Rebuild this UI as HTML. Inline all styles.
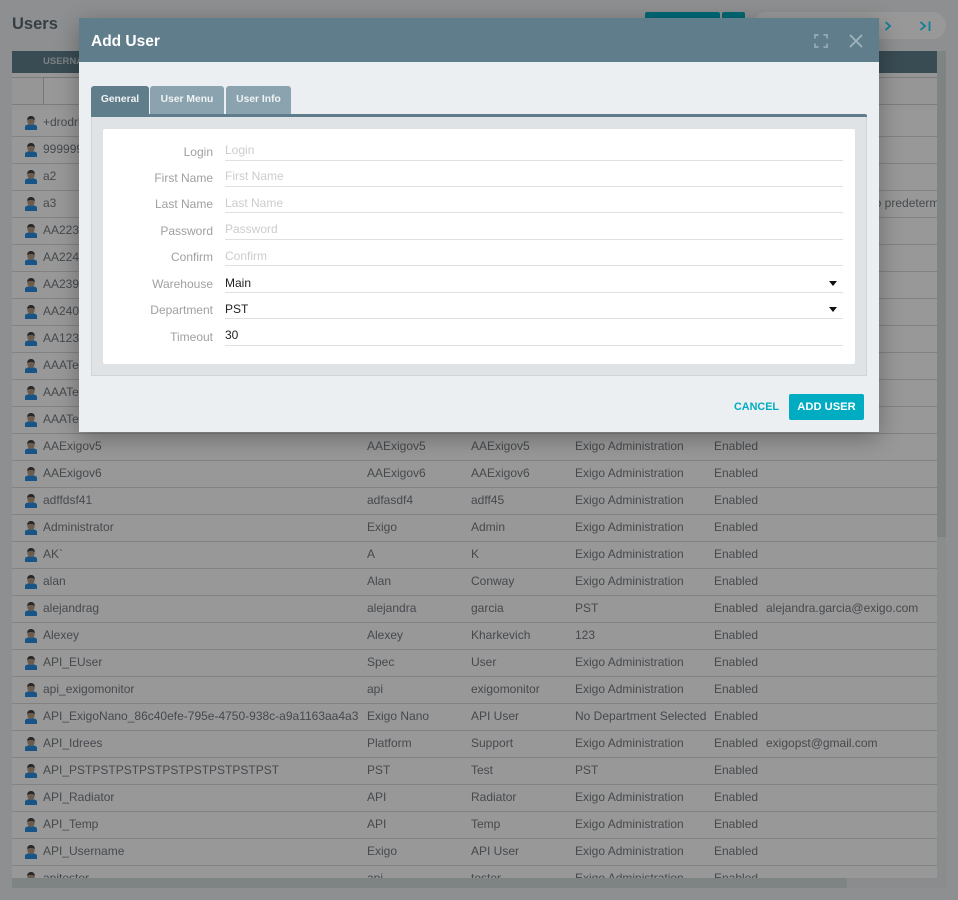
<!DOCTYPE html>
<html><head><meta charset="utf-8"><title>Users</title>
<style>
html,body{margin:0;padding:0;width:958px;height:900px;overflow:hidden;background:#eceff1;font-family:"Liberation Sans",sans-serif}
*{box-sizing:border-box}
.abs{position:absolute}
h1{position:absolute;left:12px;top:14px;margin:0;font-size:16.5px;line-height:20px;font-weight:bold;color:#5a6a75}
.grid{position:absolute;left:12px;top:51px;width:925px;height:827px;overflow:hidden;background:#fdfdfd}
.gh{height:22px;background:#607d8b}
.gh span{position:absolute;left:31px;top:5px;font-size:9.5px;font-weight:bold;color:#cfd8dc}
.flt{position:relative;height:37px;background:#fafafa}
.flt:before{content:"";position:absolute;left:0;right:0;top:4px;height:1px;background:#d0d0d0}
.flt:after{content:"";position:absolute;left:0;right:0;top:31px;height:1px;background:#d0d0d0}
.flt i{position:absolute;left:31px;top:4px;width:300px;height:28px;background:#fdfdfd;border:1px solid #c8c8c8}
.r{position:relative;height:27px;border-bottom:1px solid #d9d9d9;font-size:12px;line-height:24px;color:#757b80;white-space:nowrap;background:#fdfdfd}
.r svg{position:absolute;left:13px;top:6px;width:12px;height:14px}
.r b{font-weight:normal;position:absolute;top:0}
.c1{left:31px}.c2{left:355px}.c3{left:459px}.c4{left:563px}.c5{left:702px}.c6{left:754px}
.vs{position:absolute;left:937px;top:51px;width:9px;height:837px;background:#e6eaec}
.vt{position:absolute;left:937px;top:51px;width:9px;height:486px;background:#d2dadc}
.hs{position:absolute;left:12px;top:878px;width:934px;height:10px;background:#e6eaec}
.ht{position:absolute;left:12px;top:878px;width:835px;height:10px;background:#d2dadc}
.btn1{position:absolute;top:12px;height:20px;background:#00acc1;border-radius:2px}
.pill{position:absolute;left:753px;top:12px;width:193px;height:27px;border-radius:14px;background:#fdfdfd}
.ov{position:absolute;left:0;top:0;width:958px;height:900px;background:rgba(0,0,0,.4)}
.modal{position:absolute;left:79px;top:18px;width:800px;height:414px;background:#eceff1;box-shadow:0 6px 22px rgba(0,0,0,.3)}
.mh{position:absolute;left:0;top:0;width:800px;height:44px;background:#607d8b}
.mh span{position:absolute;left:12px;top:12px;font-size:15.5px;line-height:23px;font-weight:bold;color:#fff}
.tab{position:absolute;top:68px;height:28px;border-radius:3px 3px 0 0;background:#8ba3af;color:#f0f3f4;font-size:10.3px;font-weight:bold;line-height:27px;text-align:center}
.bar{position:absolute;left:12px;top:96px;width:776px;height:3px;background:#607d8b;border-radius:0 2px 0 0}
.panel{position:absolute;left:12px;top:99px;width:776px;height:259px;background:#dfe3e6;border:solid #cfd4d8;border-width:0 1px 1px 1px}
.card{position:absolute;left:24px;top:111px;width:752px;height:235px;background:#fff;border-radius:2px}
.l{position:absolute;left:24px;width:110px;text-align:right;font-size:12px;line-height:16px;color:#a0a0a0}
.f{position:absolute;left:146px;width:618px;height:1px;background:#e0e0e0}
.t{position:absolute;left:146px;font-size:12px;line-height:16px;color:#222}
.p{color:#ccc}
.arr{position:absolute;left:750px;width:0;height:0;border-left:4.5px solid transparent;border-right:4.5px solid transparent;border-top:5px solid #111}
.cancel{position:absolute;left:655px;top:381px;font-size:10.8px;line-height:16px;font-weight:bold;color:#00acc1}
.add{position:absolute;left:710px;top:376px;width:75px;height:26px;background:#00acc1;border-radius:2px;color:#fff;font-size:11.2px;font-weight:bold;line-height:26px;text-align:center}
</style></head><body>
<svg width="0" height="0" style="position:absolute"><symbol id="u" viewBox="0 0 12 14"><path d="M0 14V10.500C0 9.300 2 8.500 4 8.200H8C10 8.500 12 9.300 12 10.500V14Z" fill="#2b8ce0"/><path d="M2.400 2.500H9.600V5C9.600 7.300 8 9 6 9S2.400 7.300 2.400 5Z" fill="#b39a80"/><path d="M2.300 4.200C2 1.500 3.700 0 6 0S10 1.300 9.700 4.200C9 3.300 7.800 3 6 3S3 3.300 2.300 4.200Z" fill="#444"/></symbol></svg>

<h1>Users</h1>
<div class="btn1" style="left:645px;width:75px"></div>
<div class="btn1" style="left:722px;width:23px"></div>
<div class="pill"></div>

<div class="grid">
<div class="gh"><span>USERNAME</span></div>
<div class="flt"><i></i></div>
<div class="r"><svg><use href="#u"/></svg><b class="c1">+drodriguez</b></div>
<div class="r"><svg><use href="#u"/></svg><b class="c1">99999999</b></div>
<div class="r"><svg><use href="#u"/></svg><b class="c1">a2</b></div>
<div class="r"><svg><use href="#u"/></svg><b class="c1">a3</b><b style="left:854px">No predeterminado</b></div>
<div class="r"><svg><use href="#u"/></svg><b class="c1">AA223</b></div>
<div class="r"><svg><use href="#u"/></svg><b class="c1">AA224</b></div>
<div class="r"><svg><use href="#u"/></svg><b class="c1">AA239</b></div>
<div class="r"><svg><use href="#u"/></svg><b class="c1">AA240</b></div>
<div class="r"><svg><use href="#u"/></svg><b class="c1">AA123</b></div>
<div class="r"><svg><use href="#u"/></svg><b class="c1">AAATest</b></div>
<div class="r"><svg><use href="#u"/></svg><b class="c1">AAATest</b></div>
<div class="r"><svg><use href="#u"/></svg><b class="c1">AAATest</b></div>
<div class="r"><svg><use href="#u"/></svg><b class="c1">AAExigov5</b><b class="c2">AAExigov5</b><b class="c3">AAExigov5</b><b class="c4">Exigo Administration</b><b class="c5">Enabled</b></div>
<div class="r"><svg><use href="#u"/></svg><b class="c1">AAExigov6</b><b class="c2">AAExigov6</b><b class="c3">AAExigov6</b><b class="c4">Exigo Administration</b><b class="c5">Enabled</b></div>
<div class="r"><svg><use href="#u"/></svg><b class="c1">adffdsf41</b><b class="c2">adfasdf4</b><b class="c3">adff45</b><b class="c4">Exigo Administration</b><b class="c5">Enabled</b></div>
<div class="r"><svg><use href="#u"/></svg><b class="c1">Administrator</b><b class="c2">Exigo</b><b class="c3">Admin</b><b class="c4">Exigo Administration</b><b class="c5">Enabled</b></div>
<div class="r"><svg><use href="#u"/></svg><b class="c1">AK`</b><b class="c2">A</b><b class="c3">K</b><b class="c4">Exigo Administration</b><b class="c5">Enabled</b></div>
<div class="r"><svg><use href="#u"/></svg><b class="c1">alan</b><b class="c2">Alan</b><b class="c3">Conway</b><b class="c4">Exigo Administration</b><b class="c5">Enabled</b></div>
<div class="r"><svg><use href="#u"/></svg><b class="c1">alejandrag</b><b class="c2">alejandra</b><b class="c3">garcia</b><b class="c4">PST</b><b class="c5">Enabled</b><b class="c6">alejandra.garcia@exigo.com</b></div>
<div class="r"><svg><use href="#u"/></svg><b class="c1">Alexey</b><b class="c2">Alexey</b><b class="c3">Kharkevich</b><b class="c4">123</b><b class="c5">Enabled</b></div>
<div class="r"><svg><use href="#u"/></svg><b class="c1">API_EUser</b><b class="c2">Spec</b><b class="c3">User</b><b class="c4">Exigo Administration</b><b class="c5">Enabled</b></div>
<div class="r"><svg><use href="#u"/></svg><b class="c1">api_exigomonitor</b><b class="c2">api</b><b class="c3">exigomonitor</b><b class="c4">Exigo Administration</b><b class="c5">Enabled</b></div>
<div class="r"><svg><use href="#u"/></svg><b class="c1">API_ExigoNano_86c40efe-795e-4750-938c-a9a1163aa4a3</b><b class="c2">Exigo Nano</b><b class="c3">API User</b><b class="c4">No Department Selected</b><b class="c5">Enabled</b></div>
<div class="r"><svg><use href="#u"/></svg><b class="c1">API_Idrees</b><b class="c2">Platform</b><b class="c3">Support</b><b class="c4">Exigo Administration</b><b class="c5">Enabled</b><b class="c6">exigopst@gmail.com</b></div>
<div class="r"><svg><use href="#u"/></svg><b class="c1">API_PSTPSTPSTPSTPSTPSTPSTPSTPST</b><b class="c2">PST</b><b class="c3">Test</b><b class="c4">PST</b><b class="c5">Enabled</b></div>
<div class="r"><svg><use href="#u"/></svg><b class="c1">API_Radiator</b><b class="c2">API</b><b class="c3">Radiator</b><b class="c4">Exigo Administration</b><b class="c5">Enabled</b></div>
<div class="r"><svg><use href="#u"/></svg><b class="c1">API_Temp</b><b class="c2">API</b><b class="c3">Temp</b><b class="c4">Exigo Administration</b><b class="c5">Enabled</b></div>
<div class="r"><svg><use href="#u"/></svg><b class="c1">API_Username</b><b class="c2">Exigo</b><b class="c3">API User</b><b class="c4">Exigo Administration</b><b class="c5">Enabled</b></div>
<div class="r"><svg><use href="#u"/></svg><b class="c1">apitester</b><b class="c2">api</b><b class="c3">tester</b><b class="c4">Exigo Administration</b><b class="c5">Enabled</b></div>
</div>
<div class="vs"></div><div class="vt"></div>
<div class="hs"></div><div class="ht"></div>

<div class="ov"></div>
<svg class="abs" style="left:880px;top:16px" width="56" height="20" viewBox="0 0 56 20" fill="none" stroke="#0e7f96" stroke-width="1.800"><path d="M5.500 6L10 10L5.500 14"/><path d="M40.500 6L45 10L40.500 14"/><path d="M49.500 5.500V15"/></svg>

<div class="modal">
  <div class="mh"><span>Add User</span>
    <svg class="abs" style="left:735px;top:16px" width="14" height="14" viewBox="0 0 14 14" fill="none" stroke="#8fa5b0" stroke-width="2"><path d="M1 4.500V1H4.500M9.500 1H13V4.500M13 9.500V13H9.500M4.500 13H1V9.500"/></svg>
    <svg class="abs" style="left:770px;top:16px" width="14" height="14" viewBox="0 0 14 14" fill="none" stroke="#a0b3bc" stroke-width="1.800"><path d="M1 1L13 13M13 1L1 13"/></svg>
  </div>
  <div class="tab" style="left:12px;width:58px;background:#607d8b">General</div>
  <div class="tab" style="left:71px;width:74px">User Menu</div>
  <div class="tab" style="left:147px;width:65px">User Info</div>
  <div class="bar"></div>
  <div class="panel"></div>
  <div class="card"></div>

  <div class="l" style="top:126px">Login</div><div class="t p" style="top:124px">Login</div><div class="f" style="top:142px"></div>
  <div class="l" style="top:152px">First Name</div><div class="t p" style="top:150px">First Name</div><div class="f" style="top:168px"></div>
  <div class="l" style="top:178px">Last Name</div><div class="t p" style="top:177px">Last Name</div><div class="f" style="top:194px"></div>
  <div class="l" style="top:205px">Password</div><div class="t p" style="top:203px">Password</div><div class="f" style="top:221px"></div>
  <div class="l" style="top:231px">Confirm</div><div class="t p" style="top:230px">Confirm</div><div class="f" style="top:247px"></div>
  <div class="l" style="top:258px">Warehouse</div><div class="t" style="top:257px">Main</div><div class="arr" style="top:263px"></div><div class="f" style="top:274px"></div>
  <div class="l" style="top:284px">Department</div><div class="t" style="top:283px">PST</div><div class="arr" style="top:289px"></div><div class="f" style="top:300px"></div>
  <div class="l" style="top:311px">Timeout</div><div class="t" style="top:309px">30</div><div class="f" style="top:327px"></div>

  <div class="cancel">CANCEL</div>
  <div class="add">ADD USER</div>
</div>
</body></html>
